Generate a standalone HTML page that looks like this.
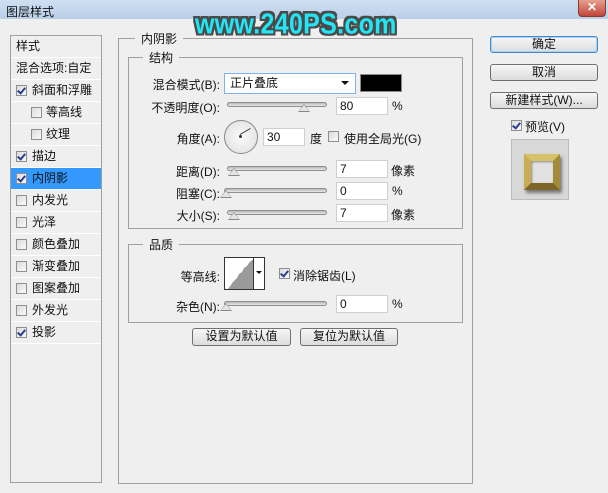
<!DOCTYPE html>
<html><head><meta charset="utf-8"><style>
*{margin:0;padding:0;box-sizing:border-box}
body{width:608px;height:493px;background:#efefef;font:12px "Liberation Sans","Noto Sans CJK SC",sans-serif;color:#111;position:relative;overflow:hidden}
.a{position:absolute;white-space:nowrap}
.title{left:0;top:0;width:608px;height:19px;background:linear-gradient(#cfdff2,#b9cfe8)}
.close{left:578px;top:0;width:28px;height:17px;background:linear-gradient(#e8a090,#c0453a);border:1px solid #8a3a33;border-top:none;border-radius:0 0 4px 4px;color:#fff;font-weight:bold;text-align:center;line-height:15px;font-size:12px}
.list{left:10px;top:35px;width:92px;height:448px;border:1px solid #a0a0a0;background:#efefef}
.row{position:absolute;left:0;width:90px;height:22px;border-bottom:1px solid #fff;line-height:21px}
.cb{position:absolute;width:11px;height:11px;border:1px solid #8e8f8f;background:linear-gradient(135deg,#dcdcdc,#fafafa)}
.cb.on::after{content:"";position:absolute;left:2px;top:0px;width:3px;height:6px;border:solid #2a3f8f;border-width:0 2px 2px 0;transform:rotate(40deg)}
.sel{background:#3399ff}
.box{border:1px solid #a0a0a0}
.leg{background:#efefef;padding:0 6px}
.inp{background:#fff;border:1px solid #cfcfcf;height:18px;line-height:16px;padding-left:3px}
.track{height:5px;border:1px solid #8f8f8f;border-radius:3px;background:linear-gradient(#b8b8b8,#e8e8e8)}
.thumb{position:absolute;width:0;height:0;border-left:6px solid transparent;border-right:6px solid transparent;border-bottom:8px solid #888}
.thumb::after{content:"";position:absolute;left:-5px;top:1px;border-left:5px solid transparent;border-right:5px solid transparent;border-bottom:6px solid #e4e4e4}
.btn{border:1px solid #707070;border-radius:3px;background:linear-gradient(#f6f6f6,#dcdcdc);text-align:center;line-height:15px}
.r{text-align:right}
.wm{left:195px;top:8px;font:bold 25px 'Liberation Sans',sans-serif;color:#22e6f5;letter-spacing:0.3px;transform:scaleY(1.15);transform-origin:top;
text-shadow:2px 0 #4a4a4a,-2px 0 #4a4a4a,0 2px #4a4a4a,0 -2px #4a4a4a,2px 2px #4a4a4a,-2px -2px #4a4a4a,2px -2px #4a4a4a,-2px 2px #4a4a4a}
</style></head><body>
<div class="a title"></div>
<div class="a" style="left:6px;top:3px">图层样式</div>
<div class="a close">✕</div>
<div class="a wm">www.240PS.com</div>

<div class="a list">
<div class="row" style="top:0;padding-left:5px">样式</div>
<div class="row" style="top:22px;padding-left:5px">混合选项:自定</div>
<div class="row" style="top:44px"><i class="cb on" style="left:5px;top:5px"></i><span style="position:absolute;left:21px">斜面和浮雕</span></div>
<div class="row" style="top:66px"><i class="cb" style="left:20px;top:5px"></i><span style="position:absolute;left:35px">等高线</span></div>
<div class="row" style="top:88px"><i class="cb" style="left:20px;top:5px"></i><span style="position:absolute;left:35px">纹理</span></div>
<div class="row" style="top:110px"><i class="cb on" style="left:5px;top:5px"></i><span style="position:absolute;left:21px">描边</span></div>
<div class="row sel" style="top:132px"><i class="cb on" style="left:5px;top:5px"></i><span style="position:absolute;left:21px">内阴影</span></div>
<div class="row" style="top:154px"><i class="cb" style="left:5px;top:5px"></i><span style="position:absolute;left:21px">内发光</span></div>
<div class="row" style="top:176px"><i class="cb" style="left:5px;top:5px"></i><span style="position:absolute;left:21px">光泽</span></div>
<div class="row" style="top:198px"><i class="cb" style="left:5px;top:5px"></i><span style="position:absolute;left:21px">颜色叠加</span></div>
<div class="row" style="top:220px"><i class="cb" style="left:5px;top:5px"></i><span style="position:absolute;left:21px">渐变叠加</span></div>
<div class="row" style="top:242px"><i class="cb" style="left:5px;top:5px"></i><span style="position:absolute;left:21px">图案叠加</span></div>
<div class="row" style="top:264px"><i class="cb" style="left:5px;top:5px"></i><span style="position:absolute;left:21px">外发光</span></div>
<div class="row" style="top:286px"><i class="cb on" style="left:5px;top:5px"></i><span style="position:absolute;left:21px">投影</span></div>
</div>

<div class="a box" style="left:118px;top:38px;width:355px;height:446px"></div>
<div class="a leg" style="left:135px;top:30px">内阴影</div>
<div class="a box" style="left:128px;top:57px;width:335px;height:172px"></div>
<div class="a leg" style="left:143px;top:49px">结构</div>

<div class="a r" style="left:140px;width:80px;top:76px">混合模式(B):</div>
<div class="a inp" style="left:224px;top:73px;width:132px;height:21px;border-color:#7eb4ea;line-height:19px;padding-left:5px">正片叠底</div>
<div class="a" style="left:341px;top:81px;border-left:4px solid transparent;border-right:4px solid transparent;border-top:4px solid #111"></div>
<div class="a" style="left:360px;top:74px;width:42px;height:18px;background:#000;border:1px solid #888"></div>

<div class="a r" style="left:130px;width:90px;top:99px">不透明度(O):</div>
<div class="a track" style="left:227px;top:102px;width:100px"></div>
<div class="a thumb" style="left:298px;top:104px"></div>
<div class="a inp" style="left:336px;top:97px;width:52px">80</div>
<div class="a" style="left:392px;top:99px">%</div>

<div class="a r" style="left:140px;width:80px;top:130px">角度(A):</div>
<div class="a" style="left:224px;top:120px;width:34px;height:34px;border-radius:50%;border:1px solid #888;background:radial-gradient(#fafafa,#dedede)"></div>
<div class="a" style="left:240px;top:134px;width:12px;height:1px;background:#333;transform:rotate(-30deg);transform-origin:left center"></div>
<div class="a" style="left:239px;top:135px;width:3px;height:3px;background:#333;border-radius:50%"></div>
<div class="a inp" style="left:263px;top:128px;width:42px">30</div>
<div class="a" style="left:310px;top:130px">度</div>
<i class="a cb" style="left:328px;top:131px"></i>
<div class="a" style="left:344px;top:130px">使用全局光(G)</div>

<div class="a r" style="left:140px;width:80px;top:163px">距离(D):</div>
<div class="a track" style="left:227px;top:166px;width:100px"></div>
<div class="a thumb" style="left:228px;top:168px"></div>
<div class="a inp" style="left:336px;top:160px;width:52px">7</div>
<div class="a" style="left:391px;top:162px">像素</div>

<div class="a r" style="left:140px;width:80px;top:185px">阻塞(C):</div>
<div class="a track" style="left:224px;top:188px;width:103px"></div>
<div class="a thumb" style="left:220px;top:190px"></div>
<div class="a inp" style="left:336px;top:182px;width:52px">0</div>
<div class="a" style="left:392px;top:184px">%</div>

<div class="a r" style="left:140px;width:80px;top:207px">大小(S):</div>
<div class="a track" style="left:227px;top:210px;width:100px"></div>
<div class="a thumb" style="left:228px;top:212px"></div>
<div class="a inp" style="left:336px;top:204px;width:52px">7</div>
<div class="a" style="left:391px;top:206px">像素</div>

<div class="a box" style="left:128px;top:244px;width:335px;height:79px"></div>
<div class="a leg" style="left:143px;top:236px">品质</div>
<div class="a r" style="left:140px;width:80px;top:268px">等高线:</div>
<div class="a" style="left:224px;top:257px;width:41px;height:33px;border:1px solid #333;background:#fff;overflow:hidden">
<svg width="30" height="31" style="position:absolute;left:0;top:0"><path d="M3 31 L8 24 L12 20 L14 16 L17 14 L19 10 L22 8 L24 5 L26 3 L29 1 L29 31Z" fill="#9a9a9a"/></svg>
<div style="position:absolute;left:28px;top:0;width:1px;height:31px;background:#333"></div>
<div style="position:absolute;left:31px;top:13px;border-left:3px solid transparent;border-right:3px solid transparent;border-top:3px solid #111"></div>
</div>
<i class="a cb on" style="left:279px;top:268px"></i>
<div class="a" style="left:293px;top:267px">消除锯齿(L)</div>

<div class="a r" style="left:140px;width:80px;top:298px">杂色(N):</div>
<div class="a track" style="left:224px;top:301px;width:103px"></div>
<div class="a thumb" style="left:220px;top:303px"></div>
<div class="a inp" style="left:336px;top:295px;width:52px">0</div>
<div class="a" style="left:392px;top:297px">%</div>

<div class="a btn" style="left:192px;top:328px;width:99px;height:18px">设置为默认值</div>
<div class="a btn" style="left:300px;top:328px;width:98px;height:18px">复位为默认值</div>

<div class="a btn" style="left:490px;top:36px;width:108px;height:17px;border-color:#3c8bd0;box-shadow:0 0 0 1px #a8d4f5 inset">确定</div>
<div class="a btn" style="left:490px;top:64px;width:108px;height:17px">取消</div>
<div class="a btn" style="left:490px;top:92px;width:108px;height:17px">新建样式(W)...</div>
<i class="a cb on" style="left:511px;top:120px"></i>
<div class="a" style="left:525px;top:118px">预览(V)</div>
<div class="a" style="left:511px;top:139px;width:58px;height:61px;border:1px solid #bbb;background:#d8d8d8"></div>
<div class="a" style="left:524px;top:154px;width:36px;height:36px;border:7px solid #a58a3a;border-top-color:#d6c06a;border-left-color:#c8ad55;border-bottom-color:#7e6628;box-shadow:2px 3px 3px #777"></div>
<div class="a" style="left:531px;top:161px;width:22px;height:22px;background:#e2e2e2;box-shadow:inset 1px 1px 2px #888"></div>
</body></html>
